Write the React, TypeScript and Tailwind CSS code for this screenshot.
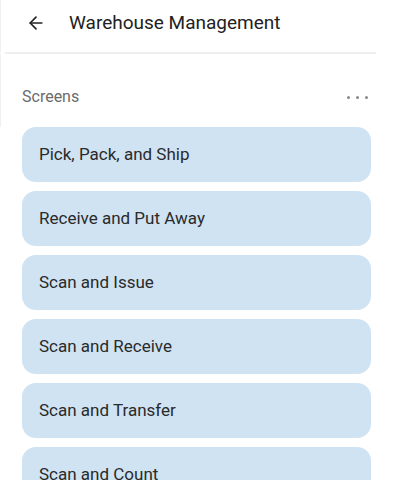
import React from "react";
import { ArrowLeft } from "lucide-react";

const screens = [
  "Pick, Pack, and Ship",
  "Receive and Put Away",
  "Scan and Issue",
  "Scan and Receive",
  "Scan and Transfer",
  "Scan and Count",
];

const App: React.FC = () => {
  return (
    <div
      className="w-[397px] h-[480px] overflow-hidden bg-white"
      style={{ fontFamily: "Roboto, 'Liberation Sans', sans-serif" }}
    >
      {/* Header */}
      <div className="border-l border-[#f0f0f0] w-[377px] h-[52px]">
        <div className="flex items-center h-[45px] pl-[25px]">
          <ArrowLeft className="w-[20px] h-[20px] text-[#222]" strokeWidth={2} />
          <h1 className="ml-[23px] text-[19px] text-[#222] leading-none">Warehouse Management</h1>
        </div>
      </div>
      <div className="ml-[5px] w-[371px] h-[2px] bg-[#efefef]" />

      {/* Section title */}
      <div className="flex items-center justify-between pl-[21px] pr-[29px] pt-[33px] pb-[20px] border-l border-[#f0f0f0] w-[397px]">
        <span className="text-[16px] leading-[20px] text-[#6b6b6b]">Screens</span>
        <div className="flex gap-[6px]">
          <span className="w-[3px] h-[3px] rounded-full bg-[#888]" />
          <span className="w-[3px] h-[3px] rounded-full bg-[#888]" />
          <span className="w-[3px] h-[3px] rounded-full bg-[#888]" />
        </div>
      </div>

      {/* List */}
      <div className="flex flex-col gap-[9px] ml-[22px] w-[349px]">
        {screens.map((s) => (
          <div
            key={s}
            className="h-[55px] shrink-0 rounded-[14px] bg-[#cfe3f3] flex items-center pl-[17px] text-[17px] text-[#2a2a2a]"
          >
            {s}
          </div>
        ))}
      </div>
    </div>
  );
};

export default App;
